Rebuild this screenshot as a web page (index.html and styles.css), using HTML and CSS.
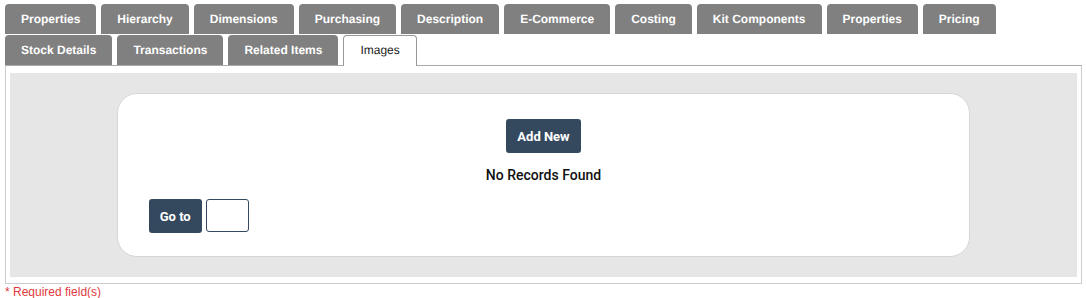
FILE: index.html
```html
<!DOCTYPE html>
<html lang="en">
<head>
    <meta charset="UTF-8">
    <title>Item Images</title>
    <link rel="stylesheet" href="styles.css">
</head>
<body>
    <div class="tabs">
        <div class="tab">Properties</div>
        <div class="tab">Hierarchy</div>
        <div class="tab">Dimensions</div>
        <div class="tab">Purchasing</div>
        <div class="tab">Description</div>
        <div class="tab">E-Commerce</div>
        <div class="tab">Costing</div>
        <div class="tab">Kit Components</div>
        <div class="tab">Properties</div>
        <div class="tab">Pricing</div>
        <div class="tab">Stock Details</div>
        <div class="tab">Transactions</div>
        <div class="tab">Related Items</div>
        <div class="tab active">Images</div>
    </div>
    <div class="panel">
        <div class="panel-inner">
            <div class="card">
                <div class="card-top">
                    <button class="btn">Add New</button>
                    <div class="empty">No Records Found</div>
                </div>
                <div class="goto">
                    <button class="btn">Go to</button>
                    <input type="text" class="page-input">
                </div>
            </div>
        </div>
    </div>
    <div class="required">* Required field(s)</div>
</body>
</html>
```
FILE: styles.css
```css
body {
    font-family: "Liberation Sans", Arial, sans-serif;
    margin: 0;
    padding: 4px 4px 0 5px;
    color: #222;
    background: #fff;
}
.tabs {
    display: flex;
    flex-wrap: wrap;
    column-gap: 5px;
    row-gap: 1px;
}
.tab {
    height: 30px;
    line-height: 30px;
    padding: 0 16px;
    background-color: #808080;
    color: #fff;
    font-size: 12px;
    font-weight: bold;
    text-rendering: geometricPrecision;
    border-top-left-radius: 4px;
    border-top-right-radius: 4px;
}
.tab.active {
    background-color: #fff;
    color: #222;
    font-weight: normal;
    border: 1px solid #999;
    border-bottom: none;
    height: 30px;
    line-height: 29px;
    padding: 0 16px;
    margin-bottom: -1px;
    position: relative;
}
.panel {
    border: 1px solid #ccc;
    border-top-color: #aaa;
    padding: 7px 4px 6px 4px;
}
.panel-inner {
    background-color: #e6e6e6;
    padding: 20px 0;
}
.card {
    width: 80%;
    height: 164px;
    margin: 0 auto;
    background-color: #fff;
    border: 1px solid #d6d6d6;
    border-radius: 20px;
    padding: 25px 31px 0;
    box-sizing: border-box;
    font-family: Roboto, "Liberation Sans", sans-serif;
}
.card-top {
    display: flex;
    flex-direction: column;
    align-items: center;
}
.btn {
    background-color: #34495e;
    color: #fff;
    border: none;
    border-radius: 3px;
    height: 34px;
    padding: 0 11px;
    font-family: Roboto, "Liberation Sans", sans-serif;
    font-size: 13px;
    font-weight: bold;
}
.empty {
    margin-top: 14px;
    line-height: 17px;
    font-size: 14px;
    font-weight: 500;
    color: #111;
}
.goto {
    display: flex;
    gap: 4px;
    margin-top: 15px;
}
.page-input {
    width: 43px;
    height: 33px;
    box-sizing: border-box;
    border: 1px solid #34495e;
    border-radius: 3px;
    margin: 0;
}
.required {
    color: #e0393e;
    font-size: 12px;
    line-height: 14px;
    margin-top: 1px;
}
```
